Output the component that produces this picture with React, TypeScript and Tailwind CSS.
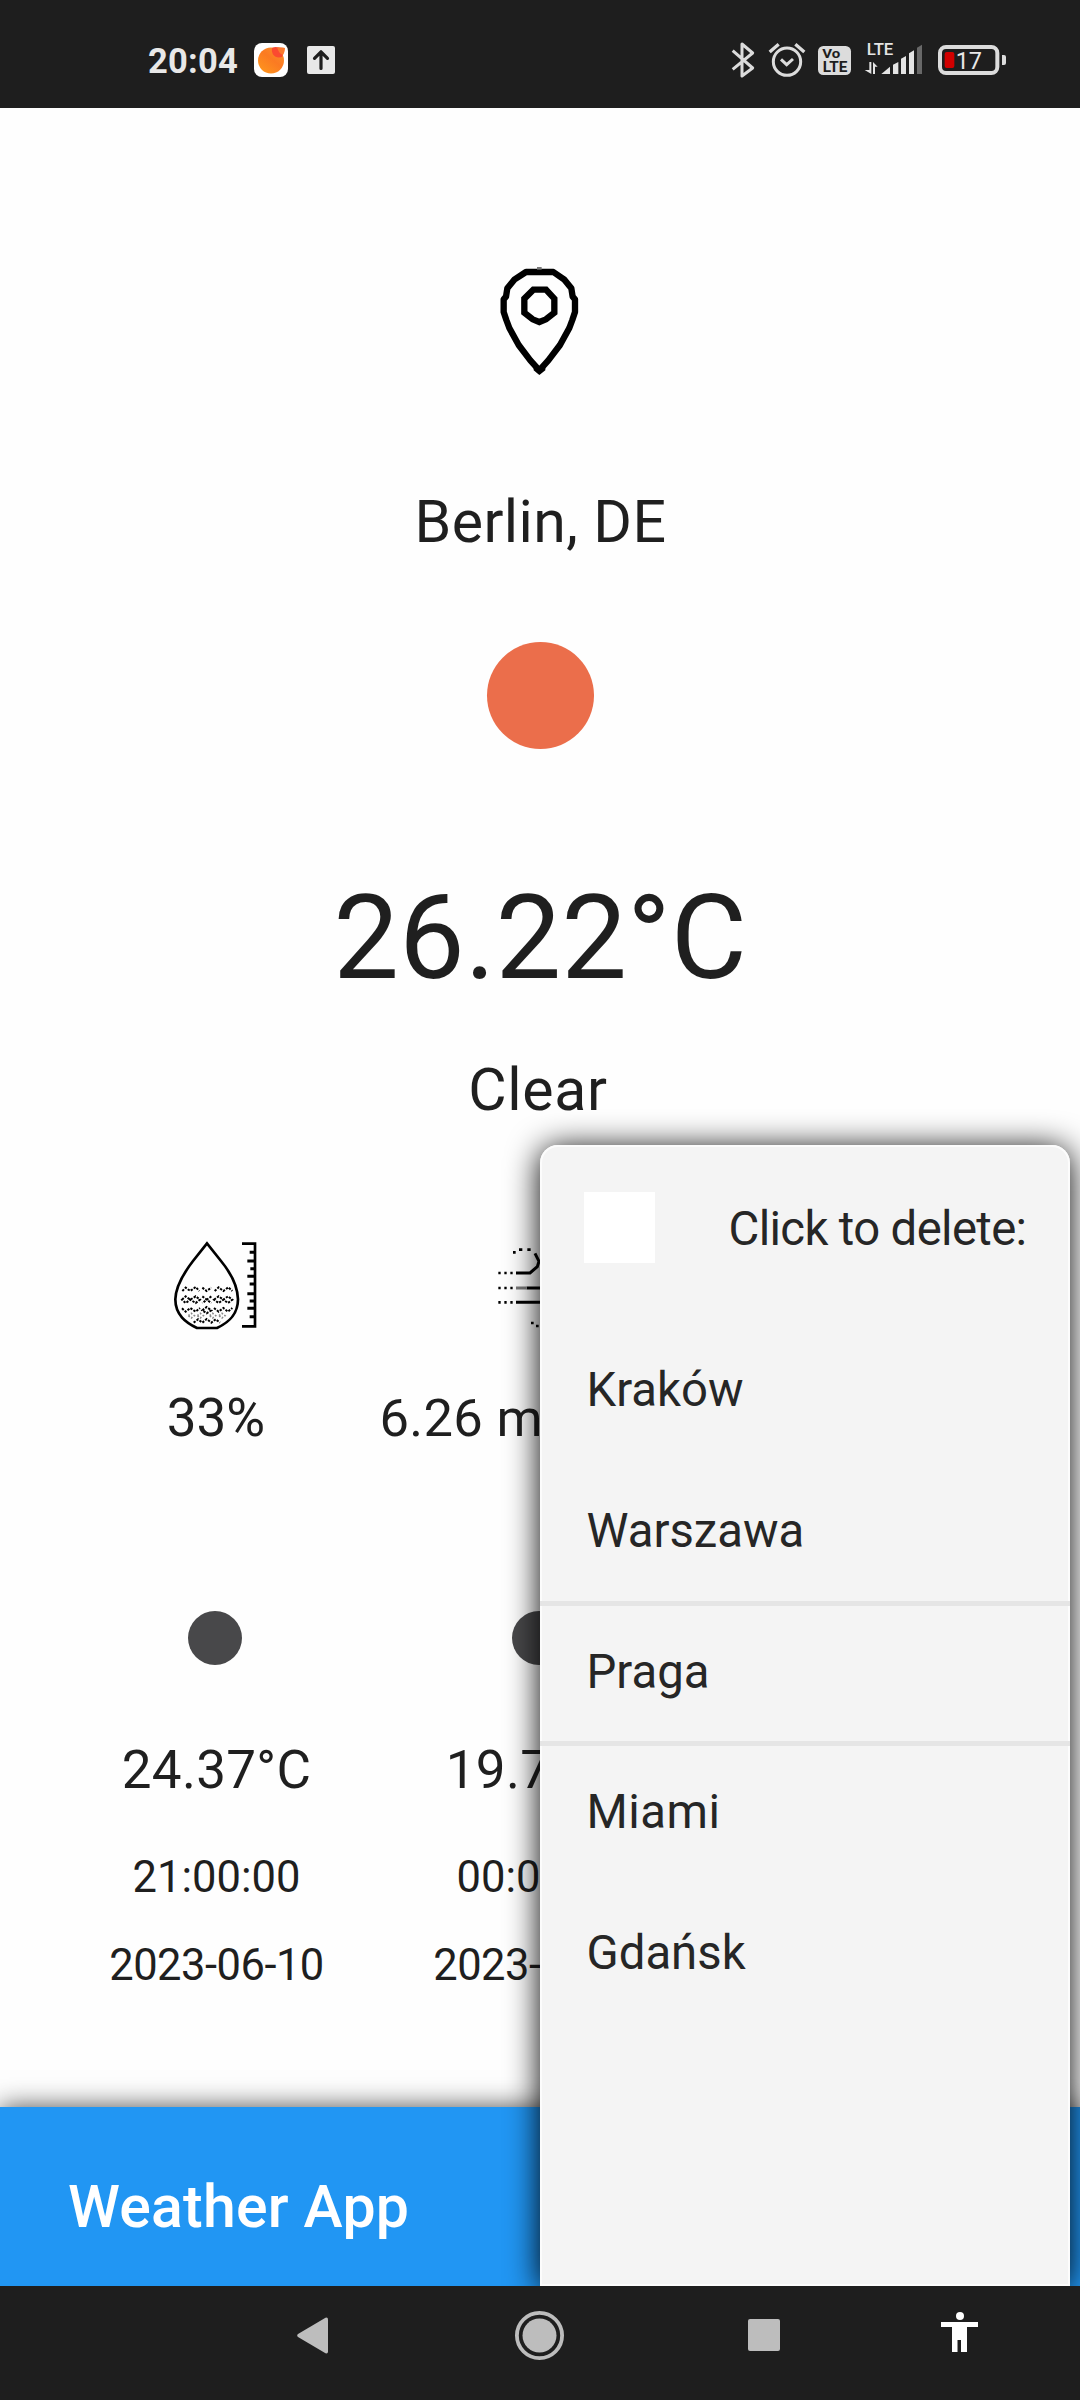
import React from 'react';

const ROWS = ['Kraków', 'Warszawa', 'Praga', 'Miami', 'Gdańsk'];

const FORECAST = [
  { temp: '24.37°C', time: '21:00:00', date: '2023-06-10' },
  { temp: '19.71°C', time: '00:00:00', date: '2023-06-11' },
];

function StatusBar() {
  return (
    <header className="flex h-[108px] shrink-0 items-start bg-[#1e1e1e] pt-[40px]">
      <div className="ml-[148px] w-[106px] text-[34.5px] leading-[42px] font-bold tracking-[0.2px] text-[#e8e8e8]">20:04</div>
      <svg className="mt-[3px] h-[34px] w-[34px]" viewBox="0 0 34 34">
        <defs>
          <linearGradient id="peach" x1="0" y1="1" x2="0.8" y2="0">
            <stop offset="0" stopColor="#ff9a1c" />
            <stop offset="0.6" stopColor="#fb7a22" />
            <stop offset="1" stopColor="#f9902a" />
          </linearGradient>
        </defs>
        <rect width="34" height="34" rx="8" fill="#fff" />
        <circle cx="17" cy="17.5" r="13" fill="url(#peach)" />
        <path d="M18 5c-1 6 3 11 10 9 2-4 2-7 1-9-4 0-7-2-11 0z" fill="#fb4a30" />
        <path d="M23 4c3 1 5 0 8 1 0 3-1 5-2 7-3-1-5-4-6-8z" fill="#fb7a2e" />
      </svg>
      <svg className="mt-[6px] ml-[19px] h-[28px] w-[28px]" viewBox="0 0 28 28">
        <rect width="28" height="28" rx="2" fill="#e8e8e8" />
        <path d="M14 22.5V6M7.5 12.3 14 5.800l6.500 6.500" fill="none" stroke="#1e1e1e" strokeWidth="3.200" strokeLinecap="round" strokeLinejoin="round" />
      </svg>
      <div className="ml-[395px] flex items-center">
        <svg className="h-[40px] w-[26px]" viewBox="60 60 78 120" fill="none" stroke="#dcdcdc" strokeWidth="9">
          <path d="M68 92 128 144 96 168V72L128 99 68 148" strokeLinejoin="round" />
        </svg>
        <svg className="ml-[12px] h-[40px] w-[38px]" viewBox="174 60 114 120" fill="none" stroke="#dcdcdc" strokeWidth="9">
          <circle cx="231" cy="125" r="41" />
          <path d="M179 96 206 73M283 96 256 73" strokeWidth="10" />
          <path d="M213 118 230 134 249 117" />
        </svg>
        <svg className="ml-[11px] h-[40px] w-[35px]" viewBox="321 60 105 120">
          <rect x="324" y="78" width="99" height="87" rx="16" fill="#dcdcdc" />
          <text x="337" y="115" fontSize="38" fontWeight="700" fill="#1e1e1e" textLength="54" lengthAdjust="spacingAndGlyphs">Vo</text>
          <text x="338" y="156" fontSize="43" fontWeight="700" fill="#1e1e1e" textLength="74" lengthAdjust="spacingAndGlyphs">LTE</text>
        </svg>
        <svg className="ml-[12px] h-[40px] w-[60px]" viewBox="462 60 180 120" fill="#e4e4e4">
          <text x="470" y="105" fontSize="48" fontWeight="500" textLength="80" lengthAdjust="spacingAndGlyphs">LTE</text>
          <path d="M478 126h6v36l-20-12h14zM489 162v-36l14 14h-8v22z" />
          <path d="M514 162h26v-22z" />
          <path d="M549 162v-28l16-8v36zM573 162v-46l15-8v54zM597 162V100l15-9v71z" />
          <path d="M621 162V83l15-9v88z" fill="#686868" />
        </svg>
        <svg className="ml-[13px] h-[40px] w-[70px]" viewBox="681 60 210 120">
          <rect x="690" y="81" width="172" height="78" rx="18" fill="none" stroke="#dcdcdc" strokeWidth="12" />
          <path d="M876 105h6q6 0 6 6v18q0 6-6 6h-6z" fill="#dcdcdc" />
          <rect x="704" y="96" width="29" height="48" rx="6" fill="#d10000" />
          <text x="737" y="148" fontSize="69" fill="#e8e8e8" textLength="79" lengthAdjust="spacingAndGlyphs">17</text>
        </svg>
      </div>
    </header>
  );
}

function PinIcon() {
  return (
    <svg className="mt-[156px] mr-[1px] h-[114px] w-[85px]" viewBox="291 72 255 342" fill="none" stroke="#000" strokeWidth="19">
      <path d="M378 96H460L492 118 514 145 518 170 525 178V216L517 240 508 264 480 315 445 361 418 391 391 361 356 315 328 264 319 240 311 216V178L318 170 322 145 344 118Z" strokeLinejoin="round" />
      <path d="M400 149H438L463 176V218L438 238 418 246 398 238 373 218V176Z" />
      <path d="M401 379H436V391L418 405 401 391Z" fill="#000" stroke="none" />
      <path d="M411 81h14v8h-14z" fill="#777" stroke="none" />
    </svg>
  );
}

function HumidityIcon() {
  return (
    <svg className="mr-[2px] h-[92px] w-[88px]" viewBox="210 120 264 276" fill="none" stroke="#000">
      <path d="M318 130 276 183C246 222 224 262 223 298 223 345 255 368 288 384H348C382 368 411 345 411 298 410 262 392 222 360 183Z" strokeWidth="8" />
      <g strokeWidth="6" strokeDasharray="7 4">
        <path d="M244 273 254 263 268 273 284 261 295 273M304 263 317 273 331 263M341 273 353 262 367 273 382 262 394 273" />
        <path d="M243 299 254 289 268 299 284 289 297 299 284 309 268 299 254 309ZM304 289 331 309M331 289 304 309M339 299 353 289 367 299 381 289 394 299 381 309 367 299 353 309Z" />
        <path d="M243 325 254 335 268 324 284 335 297 324M304 331 317 321 331 331 317 340ZM339 324 353 335 367 324 381 335 394 324" />
        <path d="M278 368 291 358 304 368 317 357 331 368 344 358 357 368" />
      </g>
      <g strokeWidth="5" strokeDasharray="5 5" stroke="#888">
        <path d="M262 347 271 340 280 347 271 354ZM289 347 298 340 307 347 298 354ZM326 347 335 340 344 347 335 354ZM354 347 363 340 372 347 363 354Z" />
      </g>
      <path d="M423 131H462V379H423" strokeWidth="8" />
      <path d="M439 183h20M439 229h20M439 281h20M439 325h20M446 157h14M448 206h14M446 252h14M446 303h14M446 350h14" strokeWidth="9" />
    </svg>
  );
}

function WindIcon() {
  return (
    <svg className="h-[92px] w-[86px]" viewBox="1191 120 258 276" fill="none" stroke="#000" strokeWidth="9">
      <path d="M1195 219h44M1195 264h44M1195 307h44" strokeDasharray="7 11" strokeWidth="8" />
      <path d="M1248 219H1290L1312 200 1317 184 1305 160M1280 264H1440M1248 307H1400" />
      <path d="M1248 264h32" stroke="#777" />
      <path d="M1239 157h8M1257 149h10M1282 149h10M1293 369h8M1308 378h8" strokeWidth="8" />
    </svg>
  );
}

function DeletePanel() {
  return (
    <aside className="absolute top-[1037px] right-[10px] bottom-0 w-[530.5px] rounded-t-[18px] bg-[#f4f4f4] text-[47.3px] text-[#262626] shadow-[0_3px_33px_rgba(0,0,0,1),inset_0_0_0_2px_#fcfcfc]">
      <div className="flex h-[175px] items-start">
        <div className="mt-[47px] ml-[44px] h-[71px] w-[71px] bg-white" />
        <div className="mt-[44px] ml-[74px] leading-[80px] tracking-[-0.65px] whitespace-nowrap">Click to delete:</div>
      </div>
      <ul>
        {ROWS.map((name) => (
          <li
            key={name}
            className={
              'relative h-[140.8px] pl-[47px] leading-[140px] ' +
              (name === 'Miami' ? 'tracking-[0.5px] ' : '') +
              (name === 'Warszawa' || name === 'Praga'
                ? 'after:absolute after:inset-x-0 after:-bottom-[4px] after:h-[5px] after:bg-[#e5e5e5]'
                : '')
            }
          >
            {name}
          </li>
        ))}
      </ul>
    </aside>
  );
}

function NavBar() {
  return (
    <nav className="flex h-[114px] shrink-0 items-start bg-[#1e1e1e]">
      <svg className="mt-[31px] ml-[297px] h-[37px] w-[31px]" viewBox="0 0 31 37">
        <path d="M1 17 28.500 .7Q31 0 31 2.500V34.500Q31 37 28.500 36.300L1 20Q-.6 18.500 1 17z" fill="#bdbdbd" />
      </svg>
      <svg className="mt-[25px] ml-[187px] h-[49px] w-[49px]" viewBox="0 0 49 49">
        <circle cx="24.500" cy="24.500" r="22.600" fill="none" stroke="#bdbdbd" strokeWidth="3.800" />
        <circle cx="24.500" cy="24.500" r="17" fill="#bdbdbd" />
      </svg>
      <div className="mt-[33px] ml-[184px] size-[32px] rounded-[2px] bg-[#bdbdbd]" />
      <svg className="mt-[26px] ml-[161px] h-[40px] w-[37px]" viewBox="0 0 37 40" fill="#fff">
        <circle cx="19" cy="4" r="4" />
        <path d="M0 10h37v5H26v25h-6V28h-3.500v12H11V15H0z" />
      </svg>
    </nav>
  );
}

export default function App() {
  return (
    <div className="flex h-[2400px] w-[1080px] flex-col overflow-hidden bg-[#fefefe] font-[Roboto,sans-serif] text-[#1f1f1f]">
      <StatusBar />
      <main className="relative flex h-[2178px] shrink-0 flex-col overflow-hidden">
        <section className="flex flex-col items-center">
          <PinIcon />
          <div className="mt-[104px] h-[80px] pl-[1px] text-[59px] leading-[80px] tracking-[0.4px]">Berlin, DE</div>
          <div className="mt-[80px] size-[107px] rounded-full bg-[#eb6e4b]" />
          <div className="mt-[119px] h-[140px] text-[117px] leading-[140px]">26.22°C</div>
          <div className="mt-[42px] mr-[4px] h-[80px] text-[59px] leading-[80px] tracking-[0.7px]">Clear</div>
        </section>

        <section className="mt-[110px] flex pl-[54px]">
          <div className="flex w-[324px] flex-col items-center">
            <HumidityIcon />
            <div className="mt-[51px] h-[70px] text-[53px] leading-[70px]">33%</div>
          </div>
          <div className="flex w-[324px] flex-col items-center">
            <WindIcon />
            <div className="mt-[51px] h-[70px] w-[321px] text-[52.5px] leading-[70px] tracking-[0.3px] whitespace-nowrap">6.26 m/s</div>
          </div>
        </section>

        <section className="mt-[158px] flex pl-[54px]">
          {FORECAST.map((f) => (
            <div key={f.date} className="flex w-[324px] flex-col items-center">
              <div className="mr-[3px] size-[54px] rounded-full bg-[#48484a]" />
              <div className="mt-[70px] h-[70px] pl-[1px] text-[53px] leading-[70px] tracking-[0.3px]">{f.temp}</div>
              <div className="mt-[43px] h-[60px] pl-[1px] text-[43.5px] leading-[60px]">{f.time}</div>
              <div className="mt-[28px] h-[60px] pl-[1px] text-[43.5px] leading-[60px] tracking-[-0.5px]">{f.date}</div>
            </div>
          ))}
        </section>

        <footer className="mt-auto h-[179px] bg-[#2196f3] pl-[68px] text-[59px] leading-[200px] font-medium tracking-[0.2px] text-white shadow-[0_0_25px_rgba(0,0,0,0.7)]">
          Weather App
        </footer>

        <DeletePanel />
      </main>
      <NavBar />
    </div>
  );
}
